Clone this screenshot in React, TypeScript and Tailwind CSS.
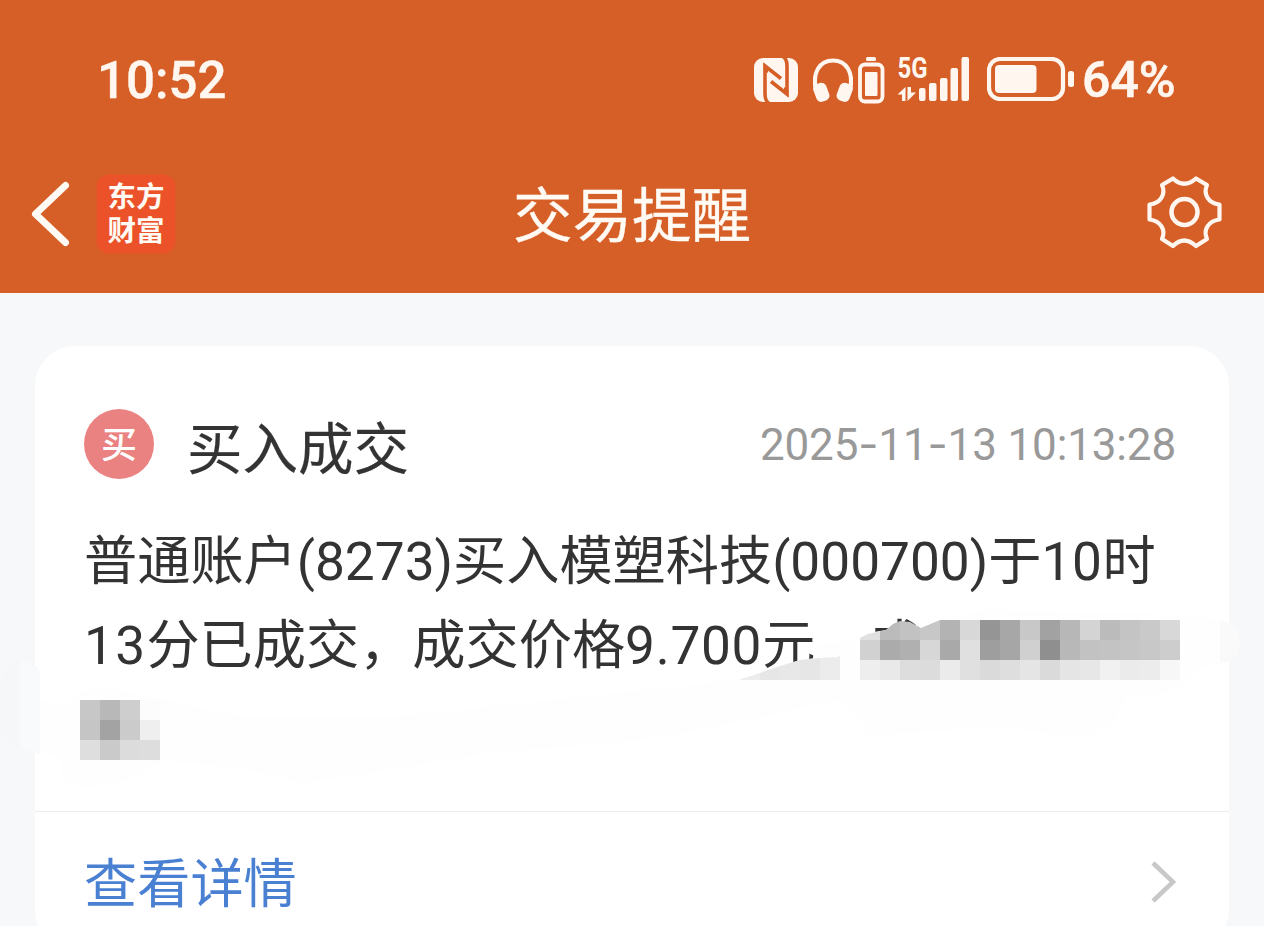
const font = "font-['Roboto','Noto_Sans_CJK_SC',sans-serif]";

type Strip = { x: number; y: number; shades: string[] };

// 20px blocks, one strip per row
const accountStrips: Strip[] = [
  { x: 80, y: 700, shades: ["#c7c7c7", "#b8b8b8", "#cecece", "#fcfcfc"] },
  { x: 80, y: 720, shades: ["#c5c5c5", "#a3a3a3", "#cbcbcb", "#efefef"] },
  { x: 80, y: 740, shades: ["#dedede", "#cacaca", "#dcdcdc", "#dddddd"] },
];

const amountStrips: Strip[] = [
  {
    x: 860,
    y: 620,
    shades: [
      "#e0e0e0", "#bbbbbb", "#c2c2c2", "#c7c7c7", "#b3b3b3", "#d8d8d8", "#959595", "#a7a7a7",
      "#c8c8c8", "#a2a2a2", "#b7b7b7", "#d4d4d4", "#bbbbbb", "#c4c4c4", "#c9c9c9", "#d8d8d8",
    ],
  },
  {
    x: 860,
    y: 640,
    shades: [
      "#d1d1d1", "#ababab", "#b0b0b0", "#d7d7d7", "#a9a9a9", "#e0e0e0", "#9e9e9e", "#a6a6a6",
      "#d0d0d0", "#8f8f8f", "#b8b8b8", "#c2c2c2", "#c3c3c3", "#c5c5c5", "#c8c8c8", "#cdcdcd",
    ],
  },
  {
    x: 860,
    y: 660,
    shades: [
      "#eeeeee", "#e9e9e9", "#dddddd", "#dcdcdc", "#ebebeb", "#e0e0e0", "#dadada", "#dedede",
      "#e5e5e5", "#dadada", "#e5e5e5", "#e7e7e7", "#f1f1f1", "#ebebeb", "#ececec", "#f7f7f7",
    ],
  },
];

const priceStrips: Strip[] = [
  { x: 740, y: 640, shades: ["#ededed", "#e6e6e6", "#e8e8e8", "#e6e6e6", "#ececec"] },
  { x: 740, y: 660, shades: ["#ededed", "#e6e6e6", "#e8e8e8", "#e6e6e6", "#ececec"] },
];

function Blocks({ strips }: { strips: Strip[] }) {
  return (
    <g shapeRendering="crispEdges">
      {strips.map((strip) =>
        strip.shades.map((fill, i) => (
          <rect key={`${strip.y}-${i}`} x={strip.x + i * 20} y={strip.y} width="20" height="20" fill={fill} />
        ))
      )}
    </g>
  );
}

// Mosaic that hides the private part of the message
function Mosaic() {
  return (
    <svg className="pointer-events-none absolute left-0 top-0" width="1264" height="926" viewBox="0 0 1264 926">
      <defs>
        <clipPath id="price">
          <path d="M738 680L760 673L780 666L800 660L820 658L838 657L840 655V680Z" />
        </clipPath>
        <clipPath id="amount">
          <path d="M860 638L868 634L886 630L893 624L900 621L910 622L921 628L940 620H1180V680H860Z" />
        </clipPath>
      </defs>
      <path d="M738 680L800 660L816 658V646L850 640L860 636L868 633L886 630L893 624L900 622L910 623L921 628L940 620L985 610L1180 614L1228 621V663Q1200 664 1186 680Q1170 697 1125 697Q1115 738 1070 736L1000 728L870 735L840 700L720 726Q600 750 500 750Q400 770 300 783Q250 765 160 762Q100 800 62 780L60 756L40 752V700L62 706Q80 684 120 690L240 716L400 716Z" fill="#fefefe" />
      <path d="M20 660H22Q34 662 40 672V754L20 748Q2 742 0 730V685Q4 662 20 660Z" fill="#f5f7f9" />
      <path d="M20 660Q34 662 40 672V754L20 748Z" fill="#f9fafb" />
      <path d="M1220 620Q1240 624 1240 645Q1238 662 1220 663Z" fill="#fafafb" />
      <g clipPath="url(#price)">
        <Blocks strips={priceStrips} />
      </g>
      <g clipPath="url(#amount)">
        <Blocks strips={amountStrips} />
      </g>
      <Blocks strips={accountStrips} />
    </svg>
  );
}

function NfcIcon() {
  return (
    <svg width="44" height="44" viewBox="0 0 44 44" fill="none">
      <rect width="44" height="44" rx="9" fill="#fff7ef" />
      <g stroke="#d65f28" strokeWidth="3.6">
        <path d="M15 45.500Q11 43 11 36V8L27 20.500" />
        <path d="M29 -1.500Q33 1 33 8V36L17 23.500" />
      </g>
      <path d="M9.500 5L14 8.500V15L9.500 12ZM34.500 39L30 35.500V29L34.500 32Z" fill="#d65f28" />
    </svg>
  );
}

function HeadphonesIcon() {
  return (
    <svg width="40" height="44" viewBox="0 0 40 44" fill="none">
      <path d="M3 32C-1 14 7 2.500 20 2.500S41 14 37 32" stroke="#fff7ef" strokeWidth="4.2" />
      <rect x="1.500" y="25" width="13.500" height="18.500" rx="5" fill="#fff7ef" transform="rotate(-20 8.5 34)" />
      <rect x="25" y="25" width="13.500" height="18.500" rx="5" fill="#fff7ef" transform="rotate(20 31.5 34)" />
    </svg>
  );
}

function DeviceBatteryIcon() {
  return (
    <svg width="27" height="47" viewBox="0 0 27 47" fill="none">
      <rect x="8" y="0" width="10" height="4" rx="1.5" fill="#fff7ef" />
      <rect x="2" y="7.5" width="22.5" height="37" rx="5" stroke="#fff7ef" strokeWidth="3.8" />
      <rect x="7" y="15" width="12.5" height="24" rx="1" fill="#fff7ef" />
    </svg>
  );
}

function SignalIcon() {
  return (
    <svg className="overflow-visible" width="73" height="48" viewBox="0 0 73 48" fill="#fff7ef">
      <text x="0.500" y="22" fontSize="29" fontWeight="700" textLength="30" lengthAdjust="spacingAndGlyphs" fontFamily="Roboto, sans-serif">
        5G
      </text>
      <path d="M0.500 38.500L8.500 31V45H5V38.500Z" />
      <path d="M10.500 31H14V36.500H19L10.500 45Z" />
      <rect x="22" y="32" width="6.5" height="13" rx="2" />
      <rect x="32" y="27" width="7.500" height="18" rx="2" />
      <rect x="43" y="22" width="7.500" height="23" rx="2" />
      <rect x="53.500" y="12" width="7.500" height="33" rx="2" />
      <rect x="64.500" y="1" width="7.500" height="44" rx="2" />
    </svg>
  );
}

function BatteryIcon() {
  return (
    <svg width="88" height="44" viewBox="0 0 88 44" fill="none">
      <rect x="2" y="2" width="74" height="40" rx="11" stroke="#fff7ef" strokeWidth="4.2" />
      <rect x="8" y="8" width="41.500" height="28" rx="4" fill="#fff7ef" />
      <rect x="81" y="14" width="6" height="16" rx="2.500" fill="#fff7ef" />
    </svg>
  );
}

function GearIcon() {
  return (
    <svg width="76" height="76" viewBox="0 0 76 76" fill="none" stroke="#fff7ef" strokeWidth="4.200" strokeLinejoin="round">
      <path d="M16 11L27 4.500Q38 15 50 4.500L61 11C57 20 62 29 73.500 30.500V45.500C62 47 57 56 61 65L50 72Q38 61 27 72L16 65C20 56 15 47 3.500 45.500V30.500C15 29 20 20 16 11Z" />
      <circle cx="38.500" cy="38" r="13" strokeWidth="4.500" />
    </svg>
  );
}

function StatusBar() {
  return (
    <div className="flex h-[160px] items-center pl-[97px] pr-[90px] font-medium leading-none text-[#fff7ef]">
      <span className="text-[51px] [-webkit-text-stroke:0.4px]">10:52</span>
      <div className="ml-auto flex items-center">
        <NfcIcon />
        <span className="ml-[15px] flex"><HeadphonesIcon /></span>
        <span className="ml-[5px] flex"><DeviceBatteryIcon /></span>
        <span className="ml-3 flex"><SignalIcon /></span>
        <span className="-mt-[2px] ml-[17px] flex"><BatteryIcon /></span>
        <span className="ml-[7px] w-[92px] whitespace-nowrap text-[50px] [-webkit-text-stroke:0.6px]">64%</span>
      </div>
    </div>
  );
}

function NavBar() {
  return (
    <div className="flex h-[133px] items-start justify-between pl-[31px] pr-[42px] text-[#fffaf3]">
      <div className="flex w-[144px] gap-[27px] pt-[15px]">
        <svg className="mt-[6px] shrink-0" width="39" height="66" viewBox="0 0 39 66" fill="none">
          <path d="M34.500 4.500L4.500 33L34.500 61.500" stroke="#fffaf3" strokeWidth="7" strokeLinejoin="round" strokeLinecap="round" />
        </svg>
        <div className="flex h-[78px] w-[78px] shrink-0 flex-col items-center justify-center rounded-xl bg-[#ec5229] pt-[1px] text-[28.500px] font-bold leading-[34px] shadow-[0_0_3px_#ec5229]">
          <span>东方</span>
          <span>财富</span>
        </div>
      </div>
      <h1 className="pl-[11px] pt-[17px] text-[59.500px] font-normal leading-[80px] [-webkit-text-stroke:0.4px]">交易提醒</h1>
      <div className="flex w-[144px] justify-end pt-[14px]">
        <GearIcon />
      </div>
    </div>
  );
}

function TradeCard() {
  return (
    <section className="mx-[35px] mt-[53px] h-[604px] rounded-[40px] bg-white">
      <div className="flex h-[466px] flex-col border-b border-[#ebebeb] pt-[63px]">
        <div className="flex h-[70px] items-center pl-[49px] pr-[53px]">
          <span className="flex h-[70px] w-[70px] items-center justify-center rounded-full bg-[#e98280] pt-[3px] text-[36px] font-medium leading-none text-white">
            买
          </span>
          <h2 className="ml-[33px] pt-[14px] text-[55.500px] leading-[70px] text-[#333333] [-webkit-text-stroke:0.2px]">买入成交</h2>
          <time className="ml-auto whitespace-nowrap text-[44px] leading-[70px] tracking-[-0.150px] text-[#999999]">
            2025<span className="font-['Inter']">-</span>11<span className="font-['Inter']">-</span>13 10:13:28
          </time>
        </div>
        <p className="mt-[41px] whitespace-nowrap pl-[49px] text-[53.200px] leading-[84px] text-[#333333]">
          普通账户(8273)买入模塑科技(000700)于<span className="tracking-[0.600px]">10</span>时
          <br />
          <span className="tracking-[1.300px]">13</span>分已成交，成交价格<span className="tracking-[0.700px]">9.700</span>元，成
        </p>
      </div>
      <a className="flex h-[138px] items-center justify-between pl-[49px] pr-[52px] text-[53.200px] text-[#4a80d2]">
        <span className="pt-[9px]">查看详情</span>
        <svg className="mt-[2px]" width="27" height="44" viewBox="0 0 27 44" fill="none">
          <path d="M3 3L23 22L3 41" stroke="#c8c8c8" strokeWidth="4.500" />
        </svg>
      </a>
    </section>
  );
}

export default function App() {
  return (
    <main lang="zh-CN" className={`relative h-[926px] w-[1264px] overflow-hidden bg-[#f7f8fa] ${font}`}>
      <header className="h-[293px] bg-[#d65f28]">
        <StatusBar />
        <NavBar />
      </header>
      <TradeCard />
      <Mosaic />
    </main>
  );
}
